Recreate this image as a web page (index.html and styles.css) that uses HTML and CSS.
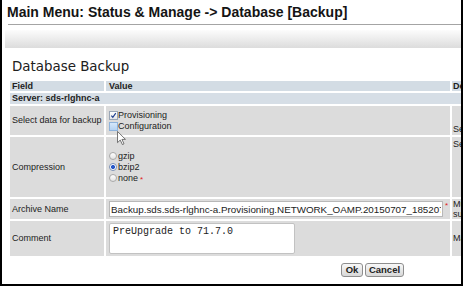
FILE: index.html
```html
<!DOCTYPE html>
<html lang="en">
<head>
<meta charset="utf-8">
<title>Database Backup</title>
<link rel="stylesheet" href="styles.css">
</head>
<body>
<div class="frame">
  <h1 class="title">Main Menu: Status &amp; Manage -&gt; Database [Backup]</h1>
  <div class="rule"></div>
  <div class="toolbar"></div>
  <h2 class="heading">Database Backup</h2>

  <div class="grid">
    <div class="cell head">Field</div>
    <div class="cell head val">Value</div>
    <div class="cell head desc">Description</div>

    <div class="cell server">Server: sds-rlghnc-a</div>

    <div class="cell">Select data for backup</div>
    <div class="cell val">
      <div class="choices">
        <label class="opt"><span class="box checked"><svg viewBox="0 0 8 8" class="tick"><path d="M1.5 4.2 L3.2 6 L6.6 1.2" fill="none" stroke="#1f3f8f" stroke-width="1.3"/></svg></span>Provisioning</label>
        <label class="opt"><span class="box hover"></span>Configuration</label>
      </div>
    </div>
    <div class="cell desc desc-bottom">Select the data sets to back up</div>

    <div class="cell">Compression</div>
    <div class="cell val">
      <div class="choices">
        <label class="opt"><span class="radio"></span>gzip</label>
        <label class="opt"><span class="radio on"></span>bzip2</label>
        <label class="opt"><span class="radio"></span>none<span class="req">*</span></label>
      </div>
    </div>
    <div class="cell desc desc-top">Select the compression type</div>

    <div class="cell">Archive Name</div>
    <div class="cell val"><input class="text-input" type="text" value="Backup.sds.sds-rlghnc-a.Provisioning.NETWORK_OAMP.20150707_185207"><span class="req">*</span></div>
    <div class="cell desc desc-two">Must be a valid file name,<br>suffix is added automatically</div>

    <div class="cell">Comment</div>
    <div class="cell val"><textarea class="memo">PreUpgrade to 71.7.0</textarea></div>
    <div class="cell desc">Max 255 characters</div>
  </div>

  <div class="actions">
    <button class="btn btn-ok" type="button">Ok</button>
    <button class="btn btn-cancel" type="button">Cancel</button>
  </div>

  <svg class="cursor" viewBox="0 0 12 19" aria-hidden="true"><path d="M0.6 0.6 V15.8 L4.3 12.3 L7.2 18.4 L9.4 17.4 L6.6 11.4 H11.4 Z" fill="#fff" stroke="#555" stroke-width="1.1" stroke-linejoin="round"/></svg>
</div>
</body>
</html>
```

FILE: styles.css
```css
html, body {
  margin: 0;
  padding: 0;
  background: #fff;
}

body {
  font-family: "Liberation Sans", Arial, sans-serif;
}

.frame {
  position: relative;
  box-sizing: border-box;
  width: 463px;
  height: 286px;
  border-style: solid;
  border-color: #000;
  border-width: 0 2px 2px 2px;
  overflow: hidden;
  background: #fff;
}

.title {
  margin: 4px 0 0 5px;
  font: bold 14px/16px "Liberation Sans", Arial, sans-serif;
  color: #141414;
  white-space: nowrap;
}

.rule {
  margin: 4px 0 0 6px;
  height: 1px;
  background: #a4a4a4;
}

.toolbar {
  margin: 5px 0 0 3px;
  height: 18px;
  background: linear-gradient(#fcfcfc, #dcdcdc);
}

.heading {
  margin: 11px 0 0 10px;
  font: normal 13.4px/15px "DejaVu Sans", Verdana, sans-serif;
  color: #202020;
  white-space: nowrap;
}

.grid {
  display: grid;
  grid-template-columns: 94px 344px 200px;
  grid-template-rows: 10px 11px 29px 60px 20px 35px;
  gap: 2px;
  margin: 7px 0 0 8px;
  font-size: 9px;
  color: #222;
}

.cell {
  display: flex;
  align-items: center;
  padding: 0 2px;
  background: #dcdcdc;
  overflow: hidden;
  white-space: nowrap;
  line-height: 11px;
}

.cell.val {
  padding-left: 3px;
}

.cell.head {
  background: #d3dce4;
  font-weight: bold;
  line-height: 10px;
}

.cell.server {
  grid-column: 1 / -1;
  background: #d6dee6;
  font-weight: bold;
}

.cell.desc {
  padding-left: 1px;
}

.desc-bottom {
  align-items: flex-end;
  padding-bottom: 0;
}

.desc-top {
  align-items: flex-start;
  padding-top: 2px;
}

.desc-two {
  line-height: 10px;
}

.choices {
  display: flex;
  flex-direction: column;
}

.opt {
  display: flex;
  align-items: center;
  height: 11px;
}

.box {
  position: relative;
  box-sizing: border-box;
  width: 9px;
  height: 9px;
  margin-right: 0;
  border: 1px solid #9aa6b6;
  background: linear-gradient(#ffffff, #e4e6ea);
}

.box.hover {
  border-color: #8eb3dc;
  background: linear-gradient(#d5e7fa, #b4d2f2);
}

.tick {
  position: absolute;
  left: 0;
  top: 0;
  width: 7px;
  height: 7px;
}

.radio {
  box-sizing: border-box;
  width: 8px;
  height: 8px;
  margin-right: 1px;
  border: 1px solid #a9a9a9;
  border-radius: 50%;
  background: linear-gradient(#ffffff, #e2e2e2);
}

.radio.on {
  border-color: #7d93b8;
  background: radial-gradient(circle, #2858c8 0, #2858c8 1.6px, #ffffff 2.4px);
}

.req {
  align-self: flex-start;
  margin-left: 2px;
  color: #e02020;
  font-size: 8px;
  line-height: 9px;
}

.cell.val .req {
  margin-top: 2px;
}

.text-input {
  box-sizing: border-box;
  width: 334px;
  height: 16px;
  margin: 0;
  padding: 0 1px;
  border: 1px solid #b8b8b8;
  font: 9.8px "Liberation Sans", Arial, sans-serif;
  color: #222;
  background: #fff;
}

.memo {
  box-sizing: border-box;
  width: 186px;
  height: 31px;
  margin: 0;
  padding: 2px 3px;
  border: 1px solid #c2c2c2;
  border-radius: 2px;
  font: 10px/12px "Liberation Mono", "Courier New", monospace;
  color: #222;
  background: #fff;
  resize: none;
  overflow: hidden;
}

.actions {
  display: flex;
  gap: 2px;
  margin: 7px 0 0 339px;
}

.btn {
  box-sizing: border-box;
  height: 14px;
  margin: 0;
  padding: 0;
  border: 1px solid #8e8e8e;
  border-radius: 3px;
  background: linear-gradient(#f8f8f8, #d8d8d8);
  font: bold 9.5px/12px "Liberation Sans", Arial, sans-serif;
  color: #222;
}

.btn-ok {
  width: 22px;
}

.btn-cancel {
  width: 39px;
}

.cursor {
  position: absolute;
  left: 115px;
  top: 131px;
  width: 9px;
  height: 14px;
}
```
